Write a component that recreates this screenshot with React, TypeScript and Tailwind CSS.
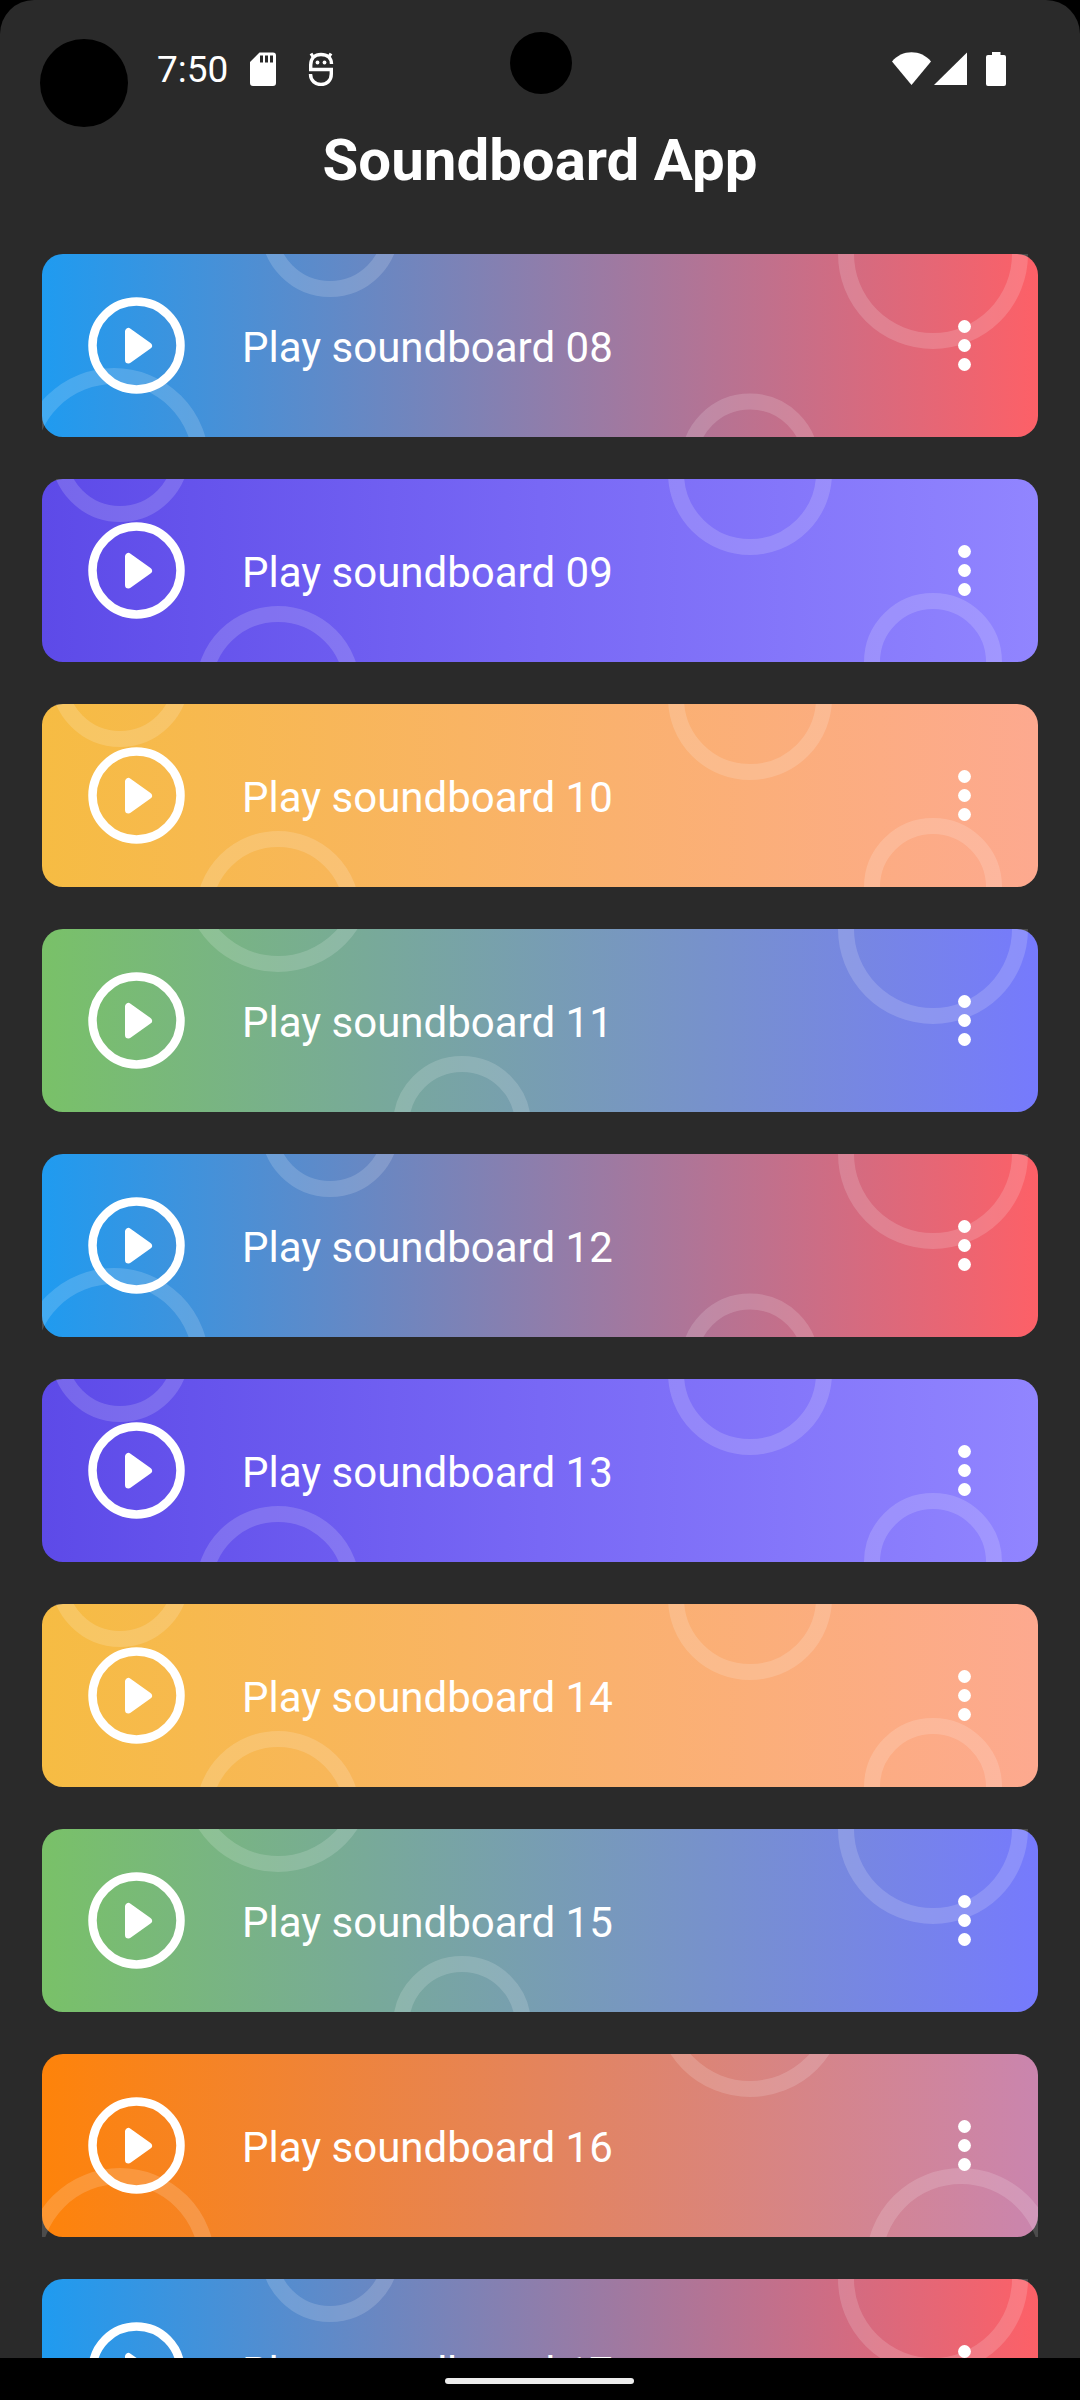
type Ring = { cx: number; cy: number; r: number };

const themes: Record<string, { background: string; rings: Ring[] }> = {
  blue: {
    background: "bg-linear-to-r/srgb from-[#1f9bf0] to-[#fd6067]",
    rings: [
      { cx: 288, cy: -26, r: 69 },
      { cx: 72, cy: 209, r: 95 },
      { cx: 708, cy: 208.5, r: 69 },
      { cx: 891, cy: 0, r: 95 },
    ],
  },
  purple: {
    background: "bg-linear-to-r/srgb from-[#5d4ae8] via-[#7868f5] to-[#9185ff]",
    rings: [
      { cx: 78, cy: -26, r: 69 },
      { cx: 236, cy: 209, r: 82 },
      { cx: 708, cy: -6, r: 82 },
      { cx: 891, cy: 183, r: 69 },
    ],
  },
  yellow: {
    background: "bg-linear-to-r/srgb from-[#f6bc43] to-[#fda98f]",
    rings: [
      { cx: 78, cy: -26, r: 69 },
      { cx: 236, cy: 209, r: 82 },
      { cx: 708, cy: -6, r: 82 },
      { cx: 891, cy: 183, r: 69 },
    ],
  },
  green: {
    background: "bg-linear-to-r/srgb from-[#79c168] to-[#767afd]",
    rings: [
      { cx: 236, cy: -52, r: 95 },
      { cx: 420, cy: 196, r: 69 },
      { cx: 891, cy: 0, r: 95 },
    ],
  },
  orange: {
    background: "bg-linear-to-r/srgb from-[#fe830a] to-[#ca85ae]",
    rings: [
      { cx: 78, cy: 209, r: 95 },
      { cx: 708, cy: -52, r: 95 },
      { cx: 919, cy: 209, r: 95 },
    ],
  },
};

const sounds = [
  { id: "08", theme: "blue" },
  { id: "09", theme: "purple" },
  { id: "10", theme: "yellow" },
  { id: "11", theme: "green" },
  { id: "12", theme: "blue" },
  { id: "13", theme: "purple" },
  { id: "14", theme: "yellow" },
  { id: "15", theme: "green" },
  { id: "16", theme: "orange" },
  { id: "17", theme: "blue" },
];

function PlayIcon() {
  return (
    <svg width="98" height="98" viewBox="0 0 98 98" className="shrink-0">
      <circle cx="48.5" cy="48.5" r="44" fill="none" stroke="#fff" strokeWidth="8.5" />
      <path d="M40.500 34.500v28.500l20-14.250z" fill="#fff" stroke="#fff" strokeWidth="7" strokeLinejoin="round" />
    </svg>
  );
}

function MoreIcon() {
  return (
    <svg width="14" height="52" viewBox="0 0 14 52" fill="#fff">
      <circle cx="6.5" cy="6.5" r="6.4" />
      <circle cx="6.5" cy="25.5" r="6.4" />
      <circle cx="6.5" cy="44.5" r="6.4" />
    </svg>
  );
}

function SoundCard({ id, theme }: { id: string; theme: string }) {
  const { background, rings } = themes[theme];
  return (
    <li className={`relative flex h-[183px] shrink-0 items-center rounded-[21px] pl-[46px] pr-[66px] ${background}`}>
      <svg className="absolute inset-0" width="996" height="183" viewBox="0 0 996 183">
        {rings.map((ring) => (
          <circle
            key={`${ring.cx}-${ring.cy}`}
            cx={ring.cx}
            cy={ring.cy}
            r={ring.r - 8}
            fill="none"
            stroke="#fff"
            strokeOpacity="0.16"
            strokeWidth="16"
          />
        ))}
      </svg>
      <div className="relative flex w-full items-center">
        <PlayIcon />
        <span className="ml-[56px] mt-[4px] flex-1 text-[42px] leading-[50px]">Play soundboard {id}</span>
        <MoreIcon />
      </div>
    </li>
  );
}

function StatusBar() {
  return (
    <div className="relative flex h-[134px] shrink-0 items-start justify-between pl-[157px] pr-[74px] pt-[47px]">
      <div className="absolute left-[40px] top-[39px] size-[88px] rounded-full bg-black" />
      <div className="absolute left-[509.5px] top-[31.5px] size-[62px] rounded-full bg-black" />
      <div className="flex h-[43px] items-center">
        <span className="mt-[2px] w-[92px] text-[37px] leading-[43px]">7:50</span>
        <svg width="28" height="34" viewBox="0 0 28 34">
          <path
            fillRule="evenodd"
            fill="#fff"
            d="M10.5.5H24a3 3 0 0 1 3 3V31a3 3 0 0 1-3 3H4a3 3 0 0 1-3-3V10zM11 3.500v7h3v-7zm5 0v7h3v-7zm5 0v7h3v-7z"
          />
        </svg>
        <svg width="26" height="34" viewBox="0 0 26 34" className="ml-[31px]" fill="none" stroke="#fff" strokeWidth="3.4">
          <path d="M23.500 12C23.500 5.500 19 2.500 13 2.500S2.700 6 2.700 13v4.500h20.600V22c0 7-5 10.500-10.300 10.500S2.500 29 2.500 22" />
          <path d="M3 1.500l2.500 4M23 1.500L20.500 5.500" strokeWidth="3.200" />
          <circle cx="9.500" cy="10.500" r="1.900" fill="#fff" stroke="none" />
          <circle cx="16.500" cy="10.500" r="1.900" fill="#fff" stroke="none" />
        </svg>
      </div>
      <div className="flex h-[43px] items-center">
        <svg width="39" height="34" viewBox="0 0 39 34" fill="#fff">
          <path d="M0 9.500C5 3.500 12 .3 19.500.3S34 3.500 39 9.500L19.500 33z" />
        </svg>
        <svg width="33" height="34" viewBox="0 0 33 34" className="ml-[3px]" fill="#fff">
          <path d="M33 .5V33H0z" />
        </svg>
        <svg width="20" height="34" viewBox="0 0 20 34" className="ml-[19px]" fill="#fff">
          <path d="M6 0h8.500v3H18a2 2 0 0 1 2 2v27a2 2 0 0 1-2 2H2a2 2 0 0 1-2-2V5a2 2 0 0 1 2-2h4z" />
        </svg>
      </div>
    </div>
  );
}

export default function App() {
  return (
    <div className="flex h-[2400px] w-[1080px] flex-col overflow-hidden bg-black font-['Roboto',sans-serif] text-white">
      <div className="flex min-h-0 flex-1 flex-col overflow-hidden rounded-t-[34px] bg-[#2a2a2a]">
        <StatusBar />
        <h1 className="-mt-[8px] h-[128px] shrink-0 text-center text-[58.2px] font-bold leading-[68px]">
          Soundboard App
        </h1>
        <ul className="flex flex-col gap-[42px] px-[42px]">
          {sounds.map((sound) => (
            <SoundCard key={sound.id} id={sound.id} theme={sound.theme} />
          ))}
        </ul>
      </div>
      <div className="flex h-[42px] shrink-0 items-start justify-center pt-[20px]">
        <div className="mr-[1px] h-[6px] w-[189px] rounded-full bg-[#ececec]" />
      </div>
    </div>
  );
}
